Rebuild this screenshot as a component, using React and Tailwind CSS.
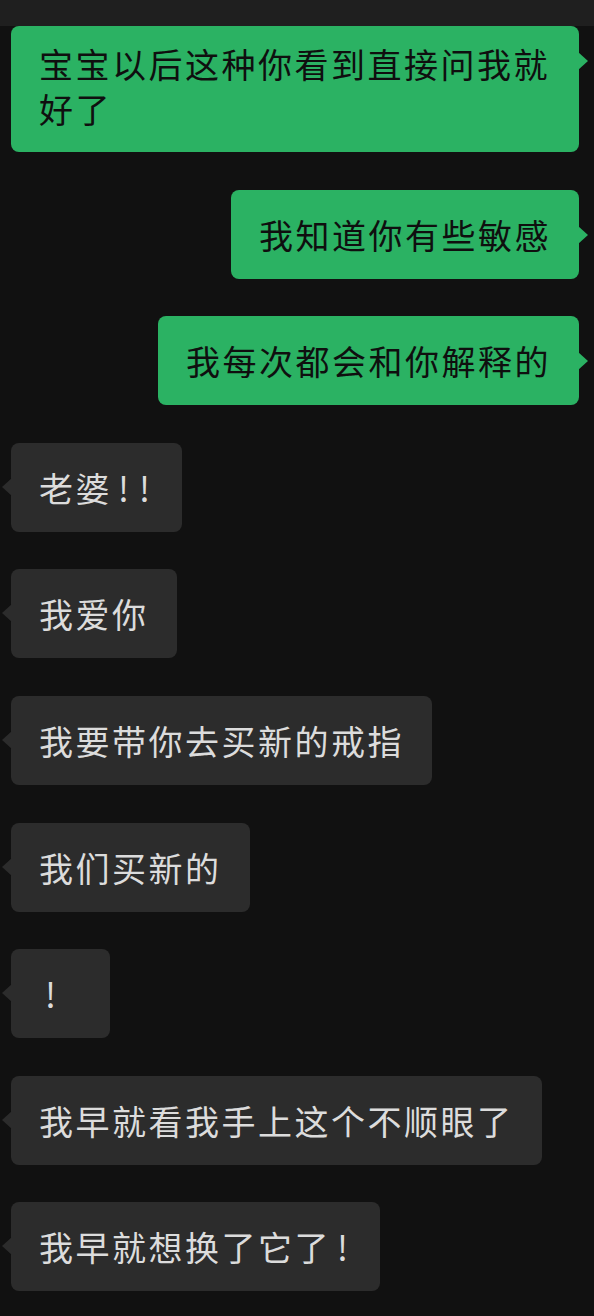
import React from 'react';

const messages = [
  { me: true, text: '宝宝以后这种你看到直接问我就好了', first: true },
  { me: true, text: '我知道你有些敏感' },
  { me: true, text: '我每次都会和你解释的' },
  { me: false, text: '老婆!!' },
  { me: false, text: '我爱你' },
  { me: false, text: '我要带你去买新的戒指' },
  { me: false, text: '我们买新的' },
  { me: false, text: '!' },
  { me: false, text: '我早就看我手上这个不顺眼了' },
  { me: false, text: '我早就想换了它了!' },
];

// narrow box for the exclamation marks so they sit like the phone font does
const renderText = (text) =>
  text.split('').map((ch, i) =>
    ch === '!' ? (
      <span key={i} className="inline-block w-[21px] pl-[6px]">
        !
      </span>
    ) : (
      ch
    )
  );

const Bubble = ({ me, text, first }) => {
  const bubbleColor = me ? 'bg-[#2bb263] text-[#0f0f0f]' : 'bg-[#2c2c2c] text-[#dcdcdc]';
  const pad = first ? 'pt-[15px] pb-[21px]' : 'py-[22px]';

  return (
    <div className={`flex ${me ? 'justify-end pr-[15px]' : 'justify-start pl-[11px]'}`}>
      <div
        className={`relative rounded-[8px] ${bubbleColor} ${pad} px-[28px] min-w-[99px] max-w-[568px] text-[34px] leading-[45px] tracking-[2.5px]`}
      >
        {renderText(text)}
        {me ? (
          <span
            className={`absolute right-[-9px] ${first ? 'top-[26px]' : 'top-[36px]'} w-0 h-0 border-y-[9px] border-y-transparent border-l-[10px] border-l-[#2bb263]`}
          />
        ) : (
          <span className="absolute left-[-9px] top-[35px] w-0 h-0 border-y-[9px] border-y-transparent border-r-[10px] border-r-[#2c2c2c]" />
        )}
      </div>
    </div>
  );
};

export default function App() {
  return (
    <div
      className="w-[594px] h-[1316px] overflow-hidden bg-[#111111] flex flex-col"
      style={{ fontFamily: '"Noto Sans CJK SC", "Noto Sans", sans-serif' }}
    >
      <div className="h-[26px] shrink-0 bg-[#1f1f1f]" />
      <div className="flex flex-col gap-[37.6px]">
        {messages.map((m, i) => (
          <Bubble key={i} {...m} />
        ))}
      </div>
    </div>
  );
}
